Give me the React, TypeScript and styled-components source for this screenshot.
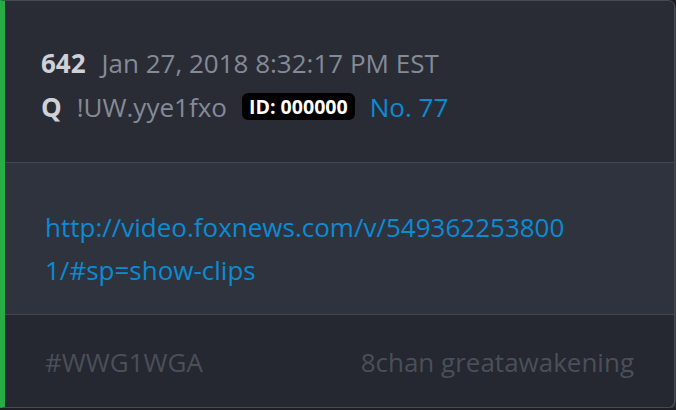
import React from "react";
import styled, { createGlobalStyle } from "styled-components";

const Global = createGlobalStyle`
  html, body { margin: 0; padding: 0; background: #1d1f25; }
  body { font-family: "Open Sans", "Noto Sans", sans-serif; }
`;

const Card = styled.div`
  box-sizing: border-box;
  width: 675px;
  height: 408px;
  display: flex;
  flex-direction: column;
  border: 1px solid #464a54;
  border-left: 5px solid #27ad45;
  border-radius: 0 7px 7px 0;
  overflow: hidden;
  background: #292c35;
  box-shadow: 1px 1px 0 #3a3d45;
`;

const Header = styled.div`
  padding: 40px 36px 33px;
  background: #292c35;
  border-bottom: 1px solid #424650;
`;

const Row = styled.div`
  display: flex;
  align-items: center;
  height: 44px;
  font-size: 26px;
  white-space: nowrap;
`;

const Strong = styled.span<{ $gap: number }>`
  font-weight: 700;
  color: #cfd1d6;
  margin-right: ${(p) => p.$gap}px;
`;

const Muted = styled.span<{ $gap?: number }>`
  color: #858a97;
  margin-right: ${(p) => p.$gap ?? 0}px;
`;

const Badge = styled.span`
  background: #000;
  color: #fff;
  font-weight: 700;
  font-size: 19.6px;
  line-height: 27px;
  padding: 0 7px;
  border-radius: 6px;
  margin-right: 15px;
  margin-top: -2px;
`;

const Blue = styled.span`
  color: #0a8bd3;
`;

const Body = styled.div`
  flex: 1;
  padding: 43px 40px 0;
  background: #2f333d;
  border-bottom: 1px solid #424650;
`;

const Link = styled.a`
  display: block;
  width: 524px;
  color: #0a8bd3;
  font-size: 26px;
  line-height: 43px;
  text-decoration: none;
  word-break: break-all;
`;

const Footer = styled.div`
  height: 92px;
  box-sizing: border-box;
  padding: 26px 40px 0;
  display: flex;
  justify-content: space-between;
  background: #252830;
  color: #4a4f5a;
  font-size: 26px;
  line-height: 43px;
`;

export default function App() {
  return (
    <>
      <Global />
      <Card>
        <Header>
          <Row>
            <Strong $gap={16}>642</Strong>
            <Muted>Jan 27, 2018 8:32:17 PM EST</Muted>
          </Row>
          <Row>
            <Strong $gap={15}>Q</Strong>
            <Muted $gap={15}>!UW.yye1fxo</Muted>
            <Badge>ID: 000000</Badge>
            <Blue>No. 77</Blue>
          </Row>
        </Header>
        <Body>
          <Link href="#">http://video.foxnews.com/v/5493622538001/#sp=show-clips</Link>
        </Body>
        <Footer>
          <span>#WWG1WGA</span>
          <span>8chan greatawakening</span>
        </Footer>
      </Card>
    </>
  );
}
